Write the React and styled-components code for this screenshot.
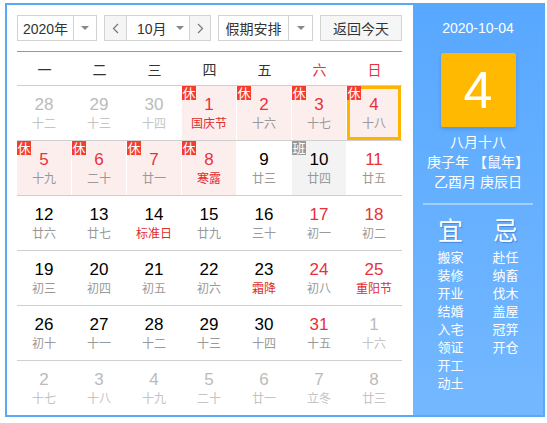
import React from "react"
import styled, { createGlobalStyle } from "styled-components"

const GlobalStyle = createGlobalStyle`
  html, body {
    margin: 0;
    padding: 0;
    background: #fff;
  }
  body {
    font-family: "Liberation Sans", "Noto Sans CJK SC", sans-serif;
  }
`

const Frame = styled.div`
  display: flex;
  width: 536px;
  height: 410px;
  margin: 3px 0 0 5px;
  border: 2px solid #5aa9f7;
`

const Main = styled.div`
  width: 385px;
  padding: 10px 11px 0 10px;
  display: flex;
  flex-direction: column;
`

const Toolbar = styled.div`
  display: flex;
  gap: 7px;
  height: 26px;
  padding-bottom: 10px;
  border-bottom: 1px solid #5aa6f0;
`

const Select = styled.div`
  display: flex;
  box-sizing: border-box;
  height: 26px;
  border: 1px solid #d2d2d2;
  background: #fff;
  color: #333;
  font-size: 14px;
  white-space: nowrap;
`

const SelectText = styled.div`
  width: ${p => p.w}px;
  display: flex;
  align-items: center;
  justify-content: center;
  box-sizing: border-box;
`

const ArrowBox = styled.div`
  width: ${p => p.w}px;
  box-sizing: border-box;
  display: flex;
  align-items: center;
  justify-content: center;
  border-left: 1px solid #d2d2d2;
`

const Caret = styled.span`
  width: 0;
  height: 0;
  border-left: 4px solid transparent;
  border-right: 4px solid transparent;
  border-top: 4px solid #888;
  margin-left: ${p => p.ml || 0}px;
`

const NavBtn = styled.div`
  width: ${p => p.w}px;
  box-sizing: border-box;
  display: flex;
  align-items: center;
  justify-content: center;
  background: #f5f5f5;
  border-left: ${p => (p.side === "right" ? "1px solid #d2d2d2" : "none")};
  border-right: ${p => (p.side === "left" ? "1px solid #d2d2d2" : "none")};
`

const MonthText = styled.div`
  width: ${p => p.w}px;
  display: flex;
  align-items: center;
  padding-left: 10px;
  box-sizing: border-box;
`

const TodayBtn = styled.div`
  box-sizing: border-box;
  width: 82px;
  height: 26px;
  border: 1px solid #d2d2d2;
  background: #f6f6f6;
  color: #333;
  font-size: 14px;
  display: flex;
  align-items: center;
  justify-content: center;
`

const WeekHead = styled.div`
  display: grid;
  grid-template-columns: repeat(7, 55px);
  height: 33px;
  border-bottom: 1px solid #cfcfcf;
`

const WeekName = styled.div`
  display: flex;
  align-items: center;
  justify-content: center;
  font-size: 14px;
  color: ${p => (p.red ? "#e8313a" : "#333")};
`

const Row = styled.div`
  display: grid;
  grid-template-columns: repeat(7, 55px);
  height: 54px;
  border-bottom: ${p => (p.last ? "none" : "1px solid #cfcfcf")};
`

const Cell = styled.div`
  position: relative;
  margin-right: 1px;
  box-sizing: border-box;
  padding-top: ${p => (p.today ? 6 : 9)}px;
  background: ${p => (p.kind === "rest" ? "#fdeeee" : p.kind === "work" ? "#f3f3f3" : "#fff")};
  border: ${p => (p.today ? "3px solid #ffb400" : "none")};
  text-align: center;
`

const Num = styled.div`
  font-size: 17px;
  line-height: 20px;
  color: ${p => (p.other ? "#bbb" : p.red ? "#e8313a" : "#000")};
`

const Lunar = styled.div`
  font-size: 12px;
  line-height: 18px;
  color: ${p => (p.other ? "#c4c4c4" : p.red ? "#e02d2d" : "#999")};
`

const Badge = styled.span`
  position: absolute;
  top: ${p => (p.today ? -3 : 0)}px;
  left: ${p => (p.today ? -3 : 0)}px;
  width: 14px;
  height: 14px;
  line-height: 14px;
  font-size: 13px;
  font-family: "Noto Sans CJK SC", sans-serif;
  color: #fff;
  text-align: center;
  background: ${p => (p.work ? "#999" : "#f63c2d")};
`

const Side = styled.div`
  width: 130px;
  background: linear-gradient(#58a8ff, #74b8ff);
  color: #fff;
  display: flex;
  flex-direction: column;
  align-items: center;
  padding-top: 13px;
`

const DateLine = styled.div`
  font-size: 14px;
  line-height: 20px;
`

const BigDay = styled.div`
  width: 75px;
  height: 74px;
  margin-top: 15px;
  background: #ffb900;
  border-radius: 2px;
  box-shadow: 0 2px 4px rgba(0, 0, 0, 0.15);
  font-size: 52px;
  line-height: 74px;
  text-align: center;
  font-family: "Liberation Sans", sans-serif;
`

const InfoLines = styled.div`
  margin-top: 5px;
  text-align: center;
  font-size: 14px;
  line-height: 20px;
`

const Divider = styled.div`
  width: 110px;
  height: 2px;
  margin-top: 11px;
  background: #a3cffd;
`

const Advice = styled.div`
  display: grid;
  grid-template-columns: 55px 55px;
  margin-top: 10px;
`

const AdviceCol = styled.div`
  display: flex;
  flex-direction: column;
  align-items: center;
`

const AdviceHead = styled.div`
  font-size: 25px;
  line-height: 32px;
  margin-bottom: 2px;
  text-shadow: 1px 1px 1px rgba(0, 60, 140, 0.35);
`

const AdviceItem = styled.div`
  font-size: 13px;
  line-height: 18px;
`

const Chevron = ({ dir }) => (
  <svg width="7" height="11" viewBox="0 0 7 11">
    <polyline
      points={dir === "left" ? "6,1 1.5,5.5 6,10" : "1,1 5.5,5.5 1,10"}
      fill="none"
      stroke="#777"
      strokeWidth="1.2"
    />
  </svg>
)

const d = (n, l, opts = {}) => ({ n, l, ...opts })

const weeks = [
  [
    d(28, "十二", { other: true }),
    d(29, "十三", { other: true }),
    d(30, "十四", { other: true }),
    d(1, "国庆节", { kind: "rest", red: true, fest: true }),
    d(2, "十六", { kind: "rest", red: true }),
    d(3, "十七", { kind: "rest", red: true }),
    d(4, "十八", { kind: "rest", red: true, today: true })
  ],
  [
    d(5, "十九", { kind: "rest", red: true }),
    d(6, "二十", { kind: "rest", red: true }),
    d(7, "廿一", { kind: "rest", red: true }),
    d(8, "寒露", { kind: "rest", red: true, fest: true }),
    d(9, "廿三"),
    d(10, "廿四", { kind: "work" }),
    d(11, "廿五", { red: true })
  ],
  [
    d(12, "廿六"),
    d(13, "廿七"),
    d(14, "标准日", { fest: true }),
    d(15, "廿九"),
    d(16, "三十"),
    d(17, "初一", { red: true }),
    d(18, "初二", { red: true })
  ],
  [
    d(19, "初三"),
    d(20, "初四"),
    d(21, "初五"),
    d(22, "初六"),
    d(23, "霜降", { fest: true }),
    d(24, "初八", { red: true }),
    d(25, "重阳节", { red: true, fest: true })
  ],
  [
    d(26, "初十"),
    d(27, "十一"),
    d(28, "十二"),
    d(29, "十三"),
    d(30, "十四"),
    d(31, "十五", { red: true }),
    d(1, "十六", { other: true })
  ],
  [
    d(2, "十七", { other: true }),
    d(3, "十八", { other: true }),
    d(4, "十九", { other: true }),
    d(5, "二十", { other: true }),
    d(6, "廿一", { other: true }),
    d(7, "立冬", { other: true }),
    d(8, "廿三", { other: true })
  ]
]

const weekNames = ["一", "二", "三", "四", "五", "六", "日"]
const good = ["搬家", "装修", "开业", "结婚", "入宅", "领证", "开工", "动土"]
const bad = ["赴任", "纳畜", "伐木", "盖屋", "冠笄", "开仓"]

const App = () => {
  return (
    <>
      <GlobalStyle />
      <Frame>
        <Main>
          <Toolbar>
            <Select>
              <SelectText w={55}>2020年</SelectText>
              <ArrowBox w={23}><Caret /></ArrowBox>
            </Select>
            <Select>
              <NavBtn w={22} side="left"><Chevron dir="left" /></NavBtn>
              <MonthText w={62}>
                10月<Caret ml={9} />
              </MonthText>
              <NavBtn w={21} side="right"><Chevron dir="right" /></NavBtn>
            </Select>
            <Select>
              <SelectText w={69}>假期安排</SelectText>
              <ArrowBox w={24}><Caret /></ArrowBox>
            </Select>
            <TodayBtn>返回今天</TodayBtn>
          </Toolbar>
          <WeekHead>
            {weekNames.map((w, i) => (
              <WeekName key={w} red={i > 4}>{w}</WeekName>
            ))}
          </WeekHead>
          {weeks.map((week, wi) => (
            <Row key={wi} last={wi === weeks.length - 1}>
              {week.map((c, ci) => (
                <Cell key={ci} kind={c.kind} today={c.today}>
                  {c.kind === "rest" && <Badge today={c.today}>休</Badge>}
                  {c.kind === "work" && <Badge work>班</Badge>}
                  <Num other={c.other} red={c.red}>{c.n}</Num>
                  <Lunar other={c.other} red={c.fest && !c.other}>{c.l}</Lunar>
                </Cell>
              ))}
            </Row>
          ))}
        </Main>
        <Side>
          <DateLine>2020-10-04</DateLine>
          <BigDay>4</BigDay>
          <InfoLines>
            <div>八月十八</div>
            <div>庚子年 【鼠年】</div>
            <div>乙酉月 庚辰日</div>
          </InfoLines>
          <Divider />
          <Advice>
            <AdviceCol>
              <AdviceHead>宜</AdviceHead>
              {good.map(g => <AdviceItem key={g}>{g}</AdviceItem>)}
            </AdviceCol>
            <AdviceCol>
              <AdviceHead>忌</AdviceHead>
              {bad.map(b => <AdviceItem key={b}>{b}</AdviceItem>)}
            </AdviceCol>
          </Advice>
        </Side>
      </Frame>
    </>
  )
}

export default App
